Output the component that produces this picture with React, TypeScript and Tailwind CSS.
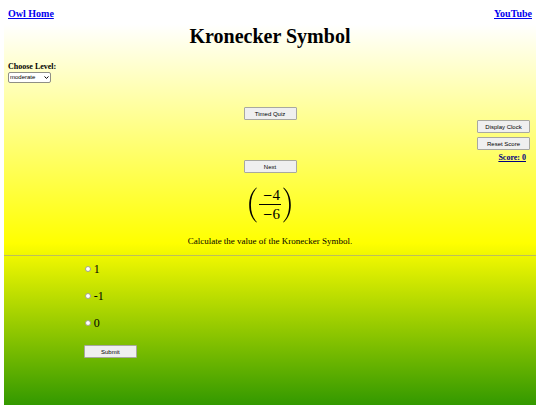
import { useState, type ReactNode } from "react";

const levels = ["easy", "moderate", "hard"];
const answers = ["1", "-1", "0"];

type QuizButtonProps = {
  children: ReactNode;
  type?: "button" | "submit";
};

const QuizButton = ({ children, type = "button" }: QuizButtonProps) => (
  <button
    type={type}
    className="block h-[13px] w-[53px] rounded-[1px] border border-[#a8a8a0] bg-[#efefef] text-center font-['Liberation_Sans',sans-serif] text-[6px] leading-[10px] text-black"
  >
    {children}
  </button>
);

const Paren = ({ flip = false }: { flip?: boolean }) => (
  <svg viewBox="0 0 8 36" className={`h-[36px] w-[8px] ${flip ? "-scale-x-100" : ""}`} aria-hidden="true">
    <path
      d="M7.4 0.6 C2.6 4.6 0.2 10.6 0.2 18 C0.2 25.4 2.6 31.4 7.4 35.4 L7.8 35 C3.8 30.8 1.9 25.2 1.9 18 C1.9 10.8 3.8 5.2 7.8 1 Z"
      fill="black"
    />
  </svg>
);

const Term = ({ value }: { value: number }) => (
  <span className="flex items-center justify-end pr-px">
    {value < 0 && <span className="font-['DejaVu_Serif',serif] text-[12px] leading-[18px]">−</span>}
    <span>{Math.abs(value)}</span>
  </span>
);

const KroneckerSymbol = ({ top, bottom }: { top: number; bottom: number }) => (
  <div className="flex items-center justify-center gap-0.5">
    <Paren />
    <div className="w-[22px] text-[15px] leading-[18px]">
      <div className="border-b border-black">
        <Term value={top} />
      </div>
      <Term value={bottom} />
    </div>
    <Paren flip />
  </div>
);

const App = () => {
  const [level, setLevel] = useState("moderate");
  const [answer, setAnswer] = useState("");

  return (
    <div className="min-h-screen bg-white px-1 font-['Liberation_Serif',serif] text-black">
      <div className="min-h-screen bg-[linear-gradient(to_bottom,#ffffff_6%,#ffff00_60%,#339900_100%)]">
        <nav className="flex justify-between px-1 pt-2 text-[10px] leading-[12px] font-bold text-[#0000ee]">
          <a href="#home" className="underline">Owl Home</a>
          <a href="#youtube" className="underline">YouTube</a>
        </nav>

        <h1 className="mt-1 text-center text-[20px] leading-[24px] font-bold">Kronecker Symbol</h1>

        <div className="mt-3.5 flex flex-col items-start px-1">
          <label htmlFor="level" className="text-[8px] leading-[10px] font-bold">
            Choose Level:
          </label>
          <div className="relative">
            <select
              id="level"
              value={level}
              onChange={(e) => setLevel(e.target.value)}
              className="block h-[11px] w-[43px] appearance-none rounded-xs border border-[#8f8f86] bg-white pl-px font-['Liberation_Sans',sans-serif] text-[6px] leading-[9px]"
            >
              {levels.map((name) => (
                <option key={name}>{name}</option>
              ))}
            </select>
            <svg
              viewBox="0 0 5 3"
              className="pointer-events-none absolute top-1 right-0.5 h-[3px] w-[5px]"
              fill="none"
              stroke="black"
              aria-hidden="true"
            >
              <path d="M0.5 0.5 L2.5 2.4 L4.5 0.5" />
            </svg>
          </div>
        </div>

        <div className="mt-6 grid grid-cols-[1fr_auto_1fr]">
          <div className="col-start-2 flex flex-col items-center">
            <QuizButton>Timed Quiz</QuizButton>
            <div className="mt-10">
              <QuizButton>Next</QuizButton>
            </div>
          </div>
          <div className="flex flex-col items-end gap-1 pt-[13px] pr-1.5">
            <QuizButton>Display Clock</QuizButton>
            <QuizButton>Reset Score</QuizButton>
            <p className="pr-1 text-[8px] leading-[8px] font-bold text-[#000080] underline">Score: 0</p>
          </div>
        </div>

        <div className="mt-[13px]">
          <KroneckerSymbol top={-4} bottom={-6} />
        </div>

        <p className="mt-3 text-center text-[9px] leading-[12px]">
          Calculate the value of the Kronecker Symbol.
        </p>

        <hr className="mt-2 border-t border-[#9a9a9a]/60" />

        <form className="pt-1.5 pl-[15%]" onSubmit={(e) => e.preventDefault()}>
          <div className="flex flex-col gap-[13px]">
            {answers.map((value) => (
              <label key={value} className="flex items-center gap-[3px] pl-px text-[12px] leading-[14px]">
                <input
                  type="radio"
                  name="answer"
                  value={value}
                  checked={answer === value}
                  onChange={() => setAnswer(value)}
                  className="size-[6px] appearance-none rounded-full border border-[#a3a38c] bg-white checked:bg-[#0075ff]"
                />
                {value}
              </label>
            ))}
          </div>
          <div className="mt-[15px]">
            <QuizButton type="submit">Submit</QuizButton>
          </div>
        </form>
      </div>
    </div>
  );
};

export default App;
